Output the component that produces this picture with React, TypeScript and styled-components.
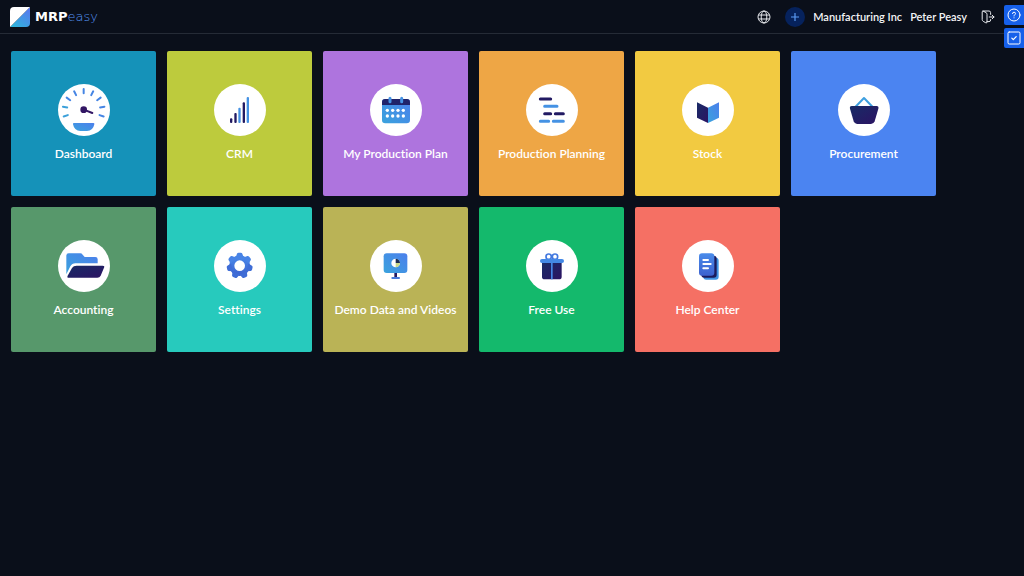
import React from "react";
import styled, { createGlobalStyle } from "styled-components";

const GlobalStyle = createGlobalStyle`
  *, *::before, *::after { box-sizing: border-box; }
  body {
    margin: 0;
    background: #0a0f1a;
    color: #ffffff;
    font-family: Lato, "Liberation Sans", sans-serif;
    font-variant-ligatures: none;
  }
`;

const Header = styled.header`
  display: flex;
  align-items: center;
  justify-content: space-between;
  height: 34px;
  padding: 0 26px 0 10px;
  border-bottom: 1px solid #252b36;
`;

const Brand = styled.a`
  display: flex;
  align-items: center;
  gap: 5px;
  text-decoration: none;
`;

const Wordmark = styled.span`
  font-family: "DejaVu Sans", sans-serif;
  font-size: 13px;
  line-height: 20px;
  font-weight: 700;
  color: #ffffff;
`;

const WordmarkLight = styled.span`
  font-weight: 200;
  color: #5594f2;
`;

const Tools = styled.nav`
  display: flex;
  align-items: center;
  gap: 11px;
`;

const AccountLinks = styled.div`
  display: flex;
  align-items: center;
  gap: 8px;
  margin-left: -3px;
`;

const IconButton = styled.button<{ $round?: boolean }>`
  display: flex;
  align-items: center;
  justify-content: center;
  width: 20px;
  height: 20px;
  padding: 0;
  border: 0;
  border-radius: 50%;
  background: ${(p) => (p.$round ? "#06225c" : "transparent")};
  color: ${(p) => (p.$round ? "#5b9cf5" : "#e8eaee")};
  cursor: pointer;
`;

const HeaderLink = styled.a`
  font-size: 11px;
  line-height: 16px;
  font-weight: 600;
  color: #f3f4f6;
  text-decoration: none;
  white-space: nowrap;
`;

const SideDock = styled.aside`
  position: fixed;
  top: 5px;
  right: 0;
  display: flex;
  flex-direction: column;
  gap: 3px;
`;

const DockButton = styled.button`
  display: flex;
  align-items: center;
  justify-content: center;
  width: 20px;
  height: 20px;
  padding: 0;
  border: 0;
  border-radius: 2px 0 0 2px;
  background: #1660ea;
  color: #ffffff;
  cursor: pointer;
`;

const TileGrid = styled.main`
  display: grid;
  grid-template-columns: repeat(auto-fill, 145px);
  gap: 11px;
  padding: 17px 11px;
`;

const Tile = styled.a<{ $color: string }>`
  display: flex;
  flex-direction: column;
  align-items: center;
  gap: 10px;
  height: 145px;
  padding-top: 33px;
  border-radius: 2px;
  background: ${(p) => p.$color};
  color: #ffffff;
  text-decoration: none;
`;

const IconDisc = styled.span`
  display: flex;
  width: 52px;
  height: 52px;
  border-radius: 50%;
  background: #ffffff;
`;

const TileLabel = styled.span`
  font-size: 12px;
  line-height: 16px;
  font-weight: 600;
  white-space: nowrap;
`;

const NAVY = "#221a63";
const SKY = "#4592e4";

const Icon = ({ children }: { children: React.ReactNode }) => (
  <svg width="52" height="52" viewBox="0 0 156 156" fill="none" aria-hidden="true">
    {children}
  </svg>
);

const Gradients = () => (
  <svg width="0" height="0" display="block" aria-hidden="true">
    <defs>
      <linearGradient id="blue" x1="1" y1="0" x2="0" y2="1">
        <stop offset="0" stopColor="#4c7fec" />
        <stop offset="1" stopColor="#3aa3dd" />
      </linearGradient>
      <linearGradient id="deep" x1="0" y1="0" x2="0" y2="1">
        <stop offset="0" stopColor="#4a8bea" />
        <stop offset="1" stopColor="#3c62cf" />
      </linearGradient>
      <linearGradient id="navy" x1="0" y1="0" x2="1" y2="1">
        <stop offset="0" stopColor="#182b66" />
        <stop offset="1" stopColor="#2c1363" />
      </linearGradient>
    </defs>
  </svg>
);

const GaugeIcon = () => (
  <Icon>
    {[-108, -81, -54, -27, 0, 27, 54, 81, 108].map((a) => (
      <path
        key={a}
        d="M77 15V28"
        transform={`rotate(${a} 77 78)`}
        stroke={a < -70 ? "#3ba0da" : "#4585e4"}
        strokeWidth="6"
        strokeLinecap="round"
      />
    ))}
    <path d="M48 117H106Q110 117 109 121Q105 141 87 141H67Q49 141 45 121Q44 117 48 117Z" fill="url(#blue)" />
    <circle cx="77" cy="77" r="10" fill="#321664" />
    <path d="M77 77L103 87" stroke="#321664" strokeWidth="6" strokeLinecap="round" />
  </Icon>
);

const BarsIcon = () => (
  <Icon>
    {[
      [51, 103, NAVY],
      [64, 87, NAVY],
      [76, 71, SKY],
      [89, 55, NAVY],
      [101, 39, SKY],
    ].map(([x, y, c]) => (
      <rect key={x} x={Number(x) - 3} y={y} width="7" height={117 - Number(y)} rx="3" fill={String(c)} />
    ))}
  </Icon>
);

const CalendarIcon = () => (
  <Icon>
    <rect x="36" y="45" width="84" height="73" rx="10" fill="url(#blue)" />
    <path d="M36 63V55Q36 45 46 45H110Q120 45 120 55V63Z" fill="#20226a" />
    <path d="M60 43V53M95 43V53" stroke={SKY} strokeWidth="9" strokeLinecap="round" />
    {[79, 96].map((y) => [52, 68, 84, 100].map((x) => <circle key={`${x}-${y}`} cx={x} cy={y} r="5" fill="#fff" />))}
  </Icon>
);

const GanttIcon = () => (
  <Icon>
    <g strokeWidth="9" strokeLinecap="round">
      <path d="M43 45H74M56 89H74M88 89H112" stroke={NAVY} />
      <path d="M56 67H93M43 112H68M82 112H112" stroke={SKY} />
    </g>
  </Icon>
);

const BoxIcon = () => (
  <Icon>
    <path d="M45 55L78 71V117L45 101Z" fill="url(#navy)" />
    <path d="M78 71L111 55V101L78 117Z" fill="url(#blue)" />
  </Icon>
);

const BasketIcon = () => (
  <Icon>
    <path d="M52 69L78 42L104 69" stroke="#3d9fdf" strokeWidth="6" strokeLinejoin="round" />
    <path d="M41 66H116Q123 66 121 74L110 112Q107 120 99 120H57Q50 120 47 112L36 74Q34 66 41 66Z" fill="url(#navy)" />
  </Icon>
);

const FolderIcon = () => (
  <Icon>
    <path d="M25 47Q25 40 32 40H67Q71 40 74 44L80 51H112Q119 51 119 58V70H52Q42 70 37 79L25 103Z" fill="url(#blue)" />
    <path d="M56 77H134Q141 77 138 83L128 107Q125 113 118 113H32Q26 113 29 107L42 84Q46 77 56 77Z" fill="url(#navy)" />
  </Icon>
);

const GearIcon = () => (
  <Icon>
    <g fill="url(#deep)">
      <path
        fillRule="evenodd"
        d="M77 46A31 31 0 1 1 77 108A31 31 0 1 1 77 46ZM77 61A16 16 0 1 0 77 93A16 16 0 1 0 77 61Z"
      />
    </g>
    {[0, 1, 2, 3, 4, 5, 6].map((i) => (
      <path
        key={i}
        d="M65 53L69 41Q70 38 74 38H80Q84 38 85 41L89 53Z"
        transform={`rotate(${(i * 360) / 7} 77 77)`}
        fill={i > 1 && i < 6 ? "#3f6dd6" : "#4883e6"}
      />
    ))}
  </Icon>
);

const ScreenIcon = () => (
  <Icon>
    <rect x="73" y="97" width="8" height="16" fill={NAVY} />
    <rect x="64" y="111" width="26" height="6" rx="3" fill="#4779dc" />
    <rect x="41" y="40" width="71" height="59" rx="9" fill="url(#blue)" />
    <circle cx="77" cy="69" r="13" fill="#fff" />
    <path d="M77 69V56A13 13 0 0 1 90 69Z" fill="#1c2b52" />
    <path d="M77 69H90A13 13 0 0 1 77 82Z" fill="#c9d98a" />
  </Icon>
);

const GiftIcon = () => (
  <Icon>
    <circle cx="68" cy="50" r="8" stroke="#4278df" strokeWidth="5" />
    <circle cx="87" cy="50" r="8" stroke="#4278df" strokeWidth="5" />
    <path d="M48 67H107V110Q107 118 99 118H56Q48 118 48 110Z" fill="url(#navy)" />
    <rect x="75" y="67" width="5" height="51" fill="#4585e4" />
    <rect x="42" y="57" width="72" height="12" rx="6" fill="#4388e5" />
  </Icon>
);

const DocsIcon = () => (
  <Icon>
    <rect x="64" y="53" width="46" height="66" rx="9" fill="#3f93e2" />
    <rect x="58" y="47" width="46" height="66" rx="9" fill="#1b1b5c" />
    <rect x="51" y="40" width="46" height="67" rx="9" fill="url(#deep)" />
    <path d="M64 60H78M64 72H86M64 85H78" stroke="#fff" strokeWidth="6" strokeLinecap="round" />
  </Icon>
);

const tiles = [
  { label: "Dashboard", color: "#1592b9", icon: <GaugeIcon /> },
  { label: "CRM", color: "#bdcb3d", icon: <BarsIcon /> },
  { label: "My Production Plan", color: "#ae74de", icon: <CalendarIcon /> },
  { label: "Production Planning", color: "#eea645", icon: <GanttIcon /> },
  { label: "Stock", color: "#f2ca41", icon: <BoxIcon /> },
  { label: "Procurement", color: "#4b84f1", icon: <BasketIcon /> },
  { label: "Accounting", color: "#57986b", icon: <FolderIcon /> },
  { label: "Settings", color: "#27cabd", icon: <GearIcon /> },
  { label: "Demo Data and Videos", color: "#bab356", icon: <ScreenIcon /> },
  { label: "Free Use", color: "#14b96c", icon: <GiftIcon /> },
  { label: "Help Center", color: "#f57064", icon: <DocsIcon /> },
];

const LogoMark = () => (
  <svg width="20" height="20" viewBox="0 0 20 20" aria-hidden="true">
    <defs>
      <linearGradient id="logo" x1="1" y1="0" x2="0.2" y2="1">
        <stop offset="0" stopColor="#5b74f0" />
        <stop offset="1" stopColor="#2fb4dc" />
      </linearGradient>
    </defs>
    <path d="M20 0V16Q20 20 16 20H0Z" fill="url(#logo)" />
    <path d="M0 20V4Q0 0 4 0H20Z" fill="#fff" />
  </svg>
);

const GlobeIcon = () => (
  <svg width="14" height="14" viewBox="0 0 14 14" fill="none" stroke="currentColor" aria-hidden="true">
    <circle cx="7" cy="7" r="6" />
    <ellipse cx="7" cy="7" rx="2.8" ry="6" />
    <path d="M1.5 5H12.5M1.5 9H12.5" />
  </svg>
);

const PlusIcon = () => (
  <svg width="10" height="10" viewBox="0 0 10 10" stroke="currentColor" strokeWidth="1.2" aria-hidden="true">
    <path d="M5 1V9M1 5H9" />
  </svg>
);

const ExitIcon = () => (
  <svg width="14" height="14" viewBox="0 0 14 14" fill="none" stroke="currentColor" strokeLinejoin="round" strokeLinecap="round" aria-hidden="true">
    <path d="M2 1L5 2.6Q6 3.1 6 4.2V12Q6 13.4 4.8 12.8L2.2 11.3Q1.2 10.7 1.2 9.6V2Q1.2 1 2.2 1H8Q9.6 1 9.6 2.6V4.4M9.6 9.6V10Q9.6 11.6 8 11.6H6" />
    <path d="M8.2 7H13M11.2 5.2L13 7L11.2 8.8" />
  </svg>
);

const HelpIcon = () => (
  <svg width="14" height="14" viewBox="0 0 14 14" fill="none" stroke="currentColor" strokeLinecap="round" aria-hidden="true">
    <circle cx="7" cy="7" r="6" />
    <path d="M5.5 5.6Q5.5 4.2 7 4.2T8.5 5.6C8.5 6.6 7 6.8 7 8M7 9.8V9.9" />
  </svg>
);

const TaskIcon = () => (
  <svg width="14" height="14" viewBox="0 0 14 14" fill="none" stroke="currentColor" strokeLinecap="round" strokeLinejoin="round" aria-hidden="true">
    <rect x="1" y="1" width="12" height="12" rx="1.2" />
    <path d="M4.8 7.2L6.3 8.7L9.2 5.6" strokeWidth="1.2" />
  </svg>
);

export default function App() {
  return (
    <>
      <GlobalStyle />
      <Gradients />
      <Header>
        <Brand href="#">
          <LogoMark />
          <Wordmark>
            MRP<WordmarkLight>easy</WordmarkLight>
          </Wordmark>
        </Brand>
        <Tools>
          <IconButton aria-label="Language">
            <GlobeIcon />
          </IconButton>
          <IconButton $round aria-label="Add">
            <PlusIcon />
          </IconButton>
          <AccountLinks>
            <HeaderLink href="#company">Manufacturing Inc</HeaderLink>
            <HeaderLink href="#profile">Peter Peasy</HeaderLink>
          </AccountLinks>
          <IconButton aria-label="Log out">
            <ExitIcon />
          </IconButton>
        </Tools>
      </Header>
      <TileGrid>
        {tiles.map((t) => (
          <Tile key={t.label} href="#" $color={t.color}>
            <IconDisc>{t.icon}</IconDisc>
            <TileLabel>{t.label}</TileLabel>
          </Tile>
        ))}
      </TileGrid>
      <SideDock>
        <DockButton aria-label="Help">
          <HelpIcon />
        </DockButton>
        <DockButton aria-label="Tasks">
          <TaskIcon />
        </DockButton>
      </SideDock>
    </>
  );
}
